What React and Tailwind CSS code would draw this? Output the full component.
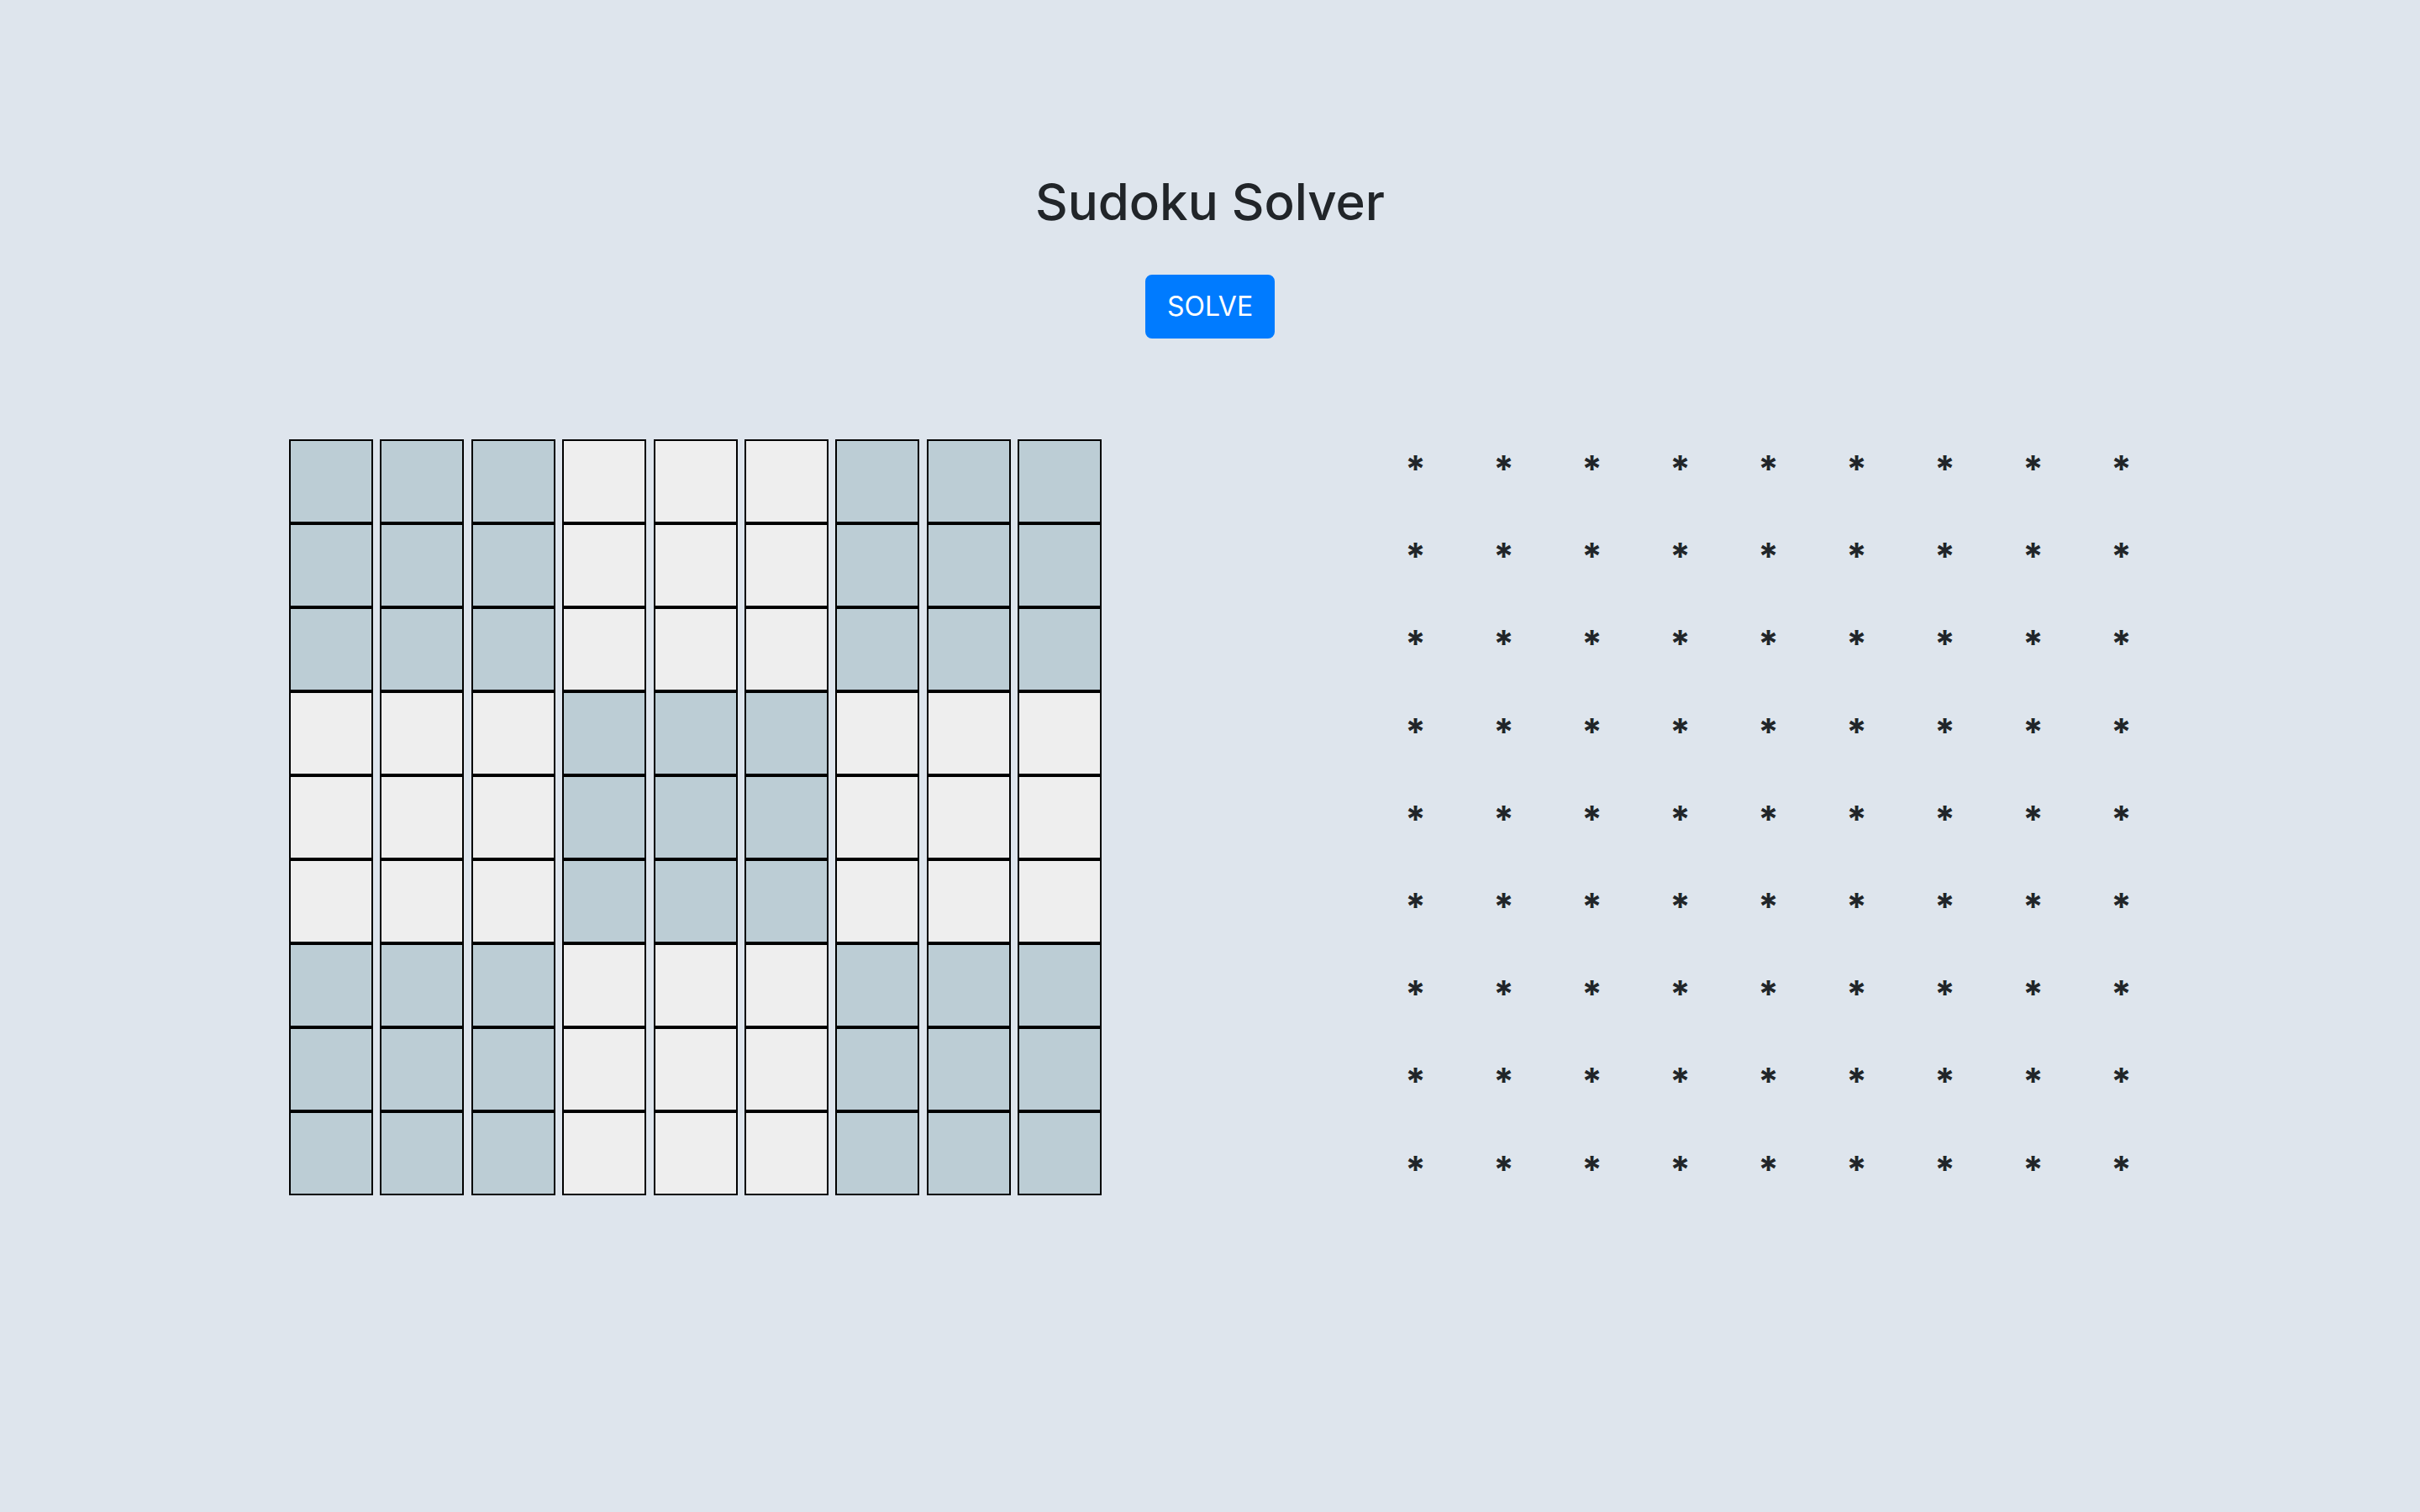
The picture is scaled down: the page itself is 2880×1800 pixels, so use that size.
import React from "react";

const N = [0, 1, 2, 3, 4, 5, 6, 7, 8];

function cellColor(r, c) {
  const br = Math.floor(r / 3);
  const bc = Math.floor(c / 3);
  return (br + bc) % 2 === 0 ? "bg-[#bccdd5]" : "bg-[#eeeeee]";
}

export default function App() {
  return (
    <div className="min-h-[1800px] w-full bg-[#dee5ed] font-['Inter',sans-serif] text-[#212529]">
      <div className="flex flex-col items-center pt-[204px]">
        <h1 className="text-[60px] leading-[72px] font-medium">Sudoku Solver</h1>
        <button className="mt-[51px] rounded-[8px] border-2 border-[#007bff] bg-[#007bff] px-[24px] py-[12px] text-[32px] leading-[48px] text-white">
          SOLVE
        </button>
      </div>
      <div className="mt-[120px] flex items-start pl-[344px]">
        <div className="flex w-[967px] justify-between">
          {N.map((c) => (
            <div key={c} className="flex flex-col">
              {N.map((r) => (
                <div
                  key={r}
                  className={`h-[100px] w-[100px] border-2 border-black ${cellColor(r, c)}`}
                />
              ))}
            </div>
          ))}
        </div>
        <div className="ml-[321px] mt-[-17px] flex flex-col">
          {N.map((r) => (
            <div key={r} className="flex h-[104.2px]">
              {N.map((c) => (
                <div
                  key={c}
                  className="flex w-[105px] items-center justify-center text-[44px] font-bold leading-none"
                >
                  *
                </div>
              ))}
            </div>
          ))}
        </div>
      </div>
    </div>
  );
}
